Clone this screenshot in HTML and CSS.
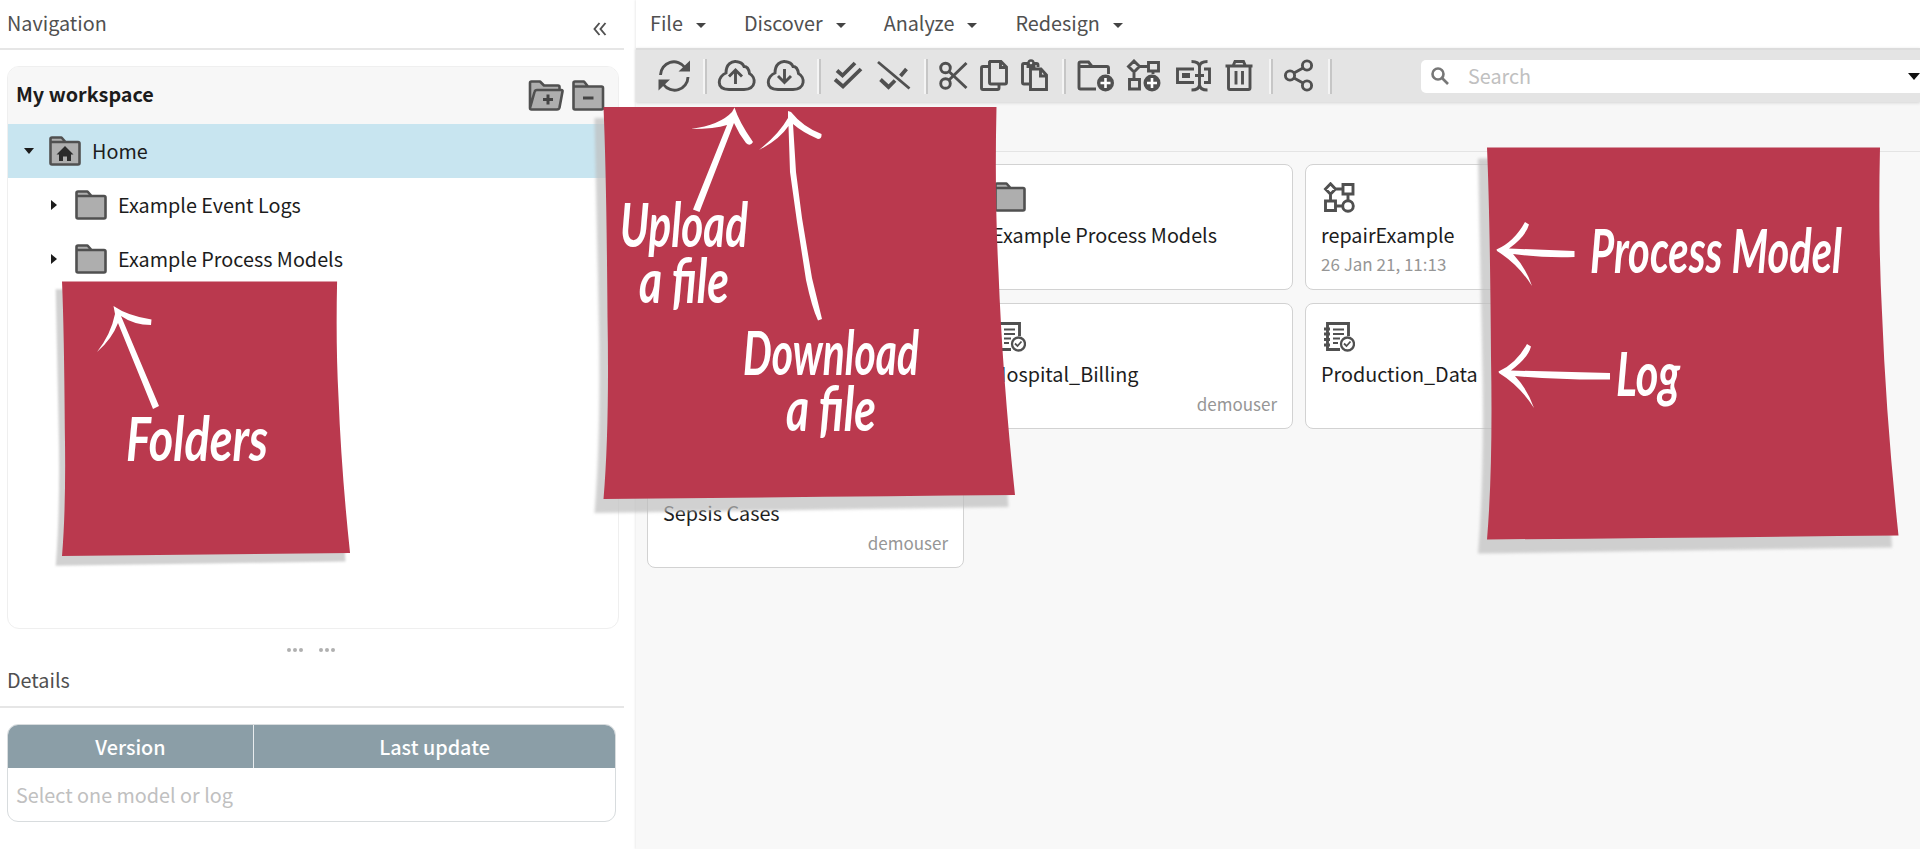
FILE: index.html
```html
<!DOCTYPE html>
<html lang="en">
<head>
<meta charset="utf-8">
<title>My workspace</title>
<link rel="stylesheet" href="styles.css">
</head>
<body>
<svg class="defs" width="0" height="0">
  <defs>
    <filter id="soft" x="-5%" y="-5%" width="110%" height="110%"><feGaussianBlur stdDeviation="1.6"/></filter>
    <symbol id="note" viewBox="-12 -2 428 414">
      <path class="note-shadow" filter="url(#soft)" d="M-9 11H380L405 400Q200 403 -9 406Q-2 320 -5 200Z"/>
      <path class="note-paper" d="M0 0H393Q391 90 395 165Q399 270 411.500 388Q200 390 0 392Q6 320 4 210Q3 70 0 0Z"/>
    </symbol>
    <symbol id="folder" viewBox="0 0 32 30">
      <path class="fold" d="M1.500 26.500V3Q1.500 1.500 3 1.500H12.500L16.500 6H29Q30.500 6 30.500 7.500V27Q30.500 28.500 29 28.500H3Q1.500 28.500 1.500 27ZM1.500 6H16.500"/>
    </symbol>
    <symbol id="model" viewBox="0 0 32 31">
      <g class="line"><path d="M7.500 1.800L12.500 7L7.500 12.200L2.500 7ZM20 2.500H30V12H20ZM2.500 19H12.500V28.500H2.500ZM12.500 7H20M7.500 12V19M25 12V18.500M12.500 24H19.500"/><circle cx="25" cy="24" r="5.300"/></g>
    </symbol>
    <symbol id="log" viewBox="0 0 32 31">
      <g class="line"><path d="M17 28.500H4.500V2.500H25.500V15M1 8H7M1 13H7M1 18.500H7M1 24H7"/><path class="thin" d="M10 8.500H21M10 13H21M10 17.500H17M10 22H15M21 22.500L23.500 25L27.500 20.500"/><circle class="mid" cx="24.500" cy="23" r="6.500"/></g>
    </symbol>
  </defs>
</svg>
<div class="app">
  <aside class="side">
    <header class="side-head"><span>Navigation</span>
      <svg class="collapse" width="14" height="14" viewBox="0 0 14 14"><path d="M6.500 1L1.500 7L6.500 13M12.500 1L7.500 7L12.500 13"/></svg>
    </header>
    <section class="tree">
      <div class="tree-head"><b>My workspace</b>
        <span class="tools">
          <svg width="36" height="31" viewBox="0 0 36 31"><path class="fold" d="M2 28V3Q2 1.500 3.500 1.500H12L16 5.500H30Q31.500 5.500 31.500 7V10M2 28L6.500 12Q7 10 9 10H33.500Q34.800 10 34.500 11.500L31.500 27.500Q31 29.500 29 29.500H3.500Q2 29.500 2 28Z"/><path class="sign" d="M20 14.500V24.500M15 19.500H25"/></svg>
          <svg width="33" height="31" viewBox="0 0 33 31"><path class="fold" d="M1.500 27.500V3Q1.500 1.500 3 1.500H12L16 6.500H29.500Q31 6.500 31 8V28Q31 29.500 29.500 29.500H3Q1.500 29.500 1.500 28ZM1.500 6.500H16"/><path class="sign" d="M11 18H21.500"/></svg>
        </span>
      </div>
      <div class="row home"><i class="down"></i>
        <svg width="32" height="30"><use href="#folder"/><path class="house" d="M16 10L24.500 18.500H22V25H18V20.500H14V25H10V18.500H7.500Z"/></svg><span>Home</span></div>
      <div class="row child"><i class="right"></i><svg width="32" height="30"><use href="#folder"/></svg><span>Example Event Logs</span></div>
      <div class="row child"><i class="right"></i><svg width="32" height="30"><use href="#folder"/></svg><span>Example Process Models</span></div>
    </section>
    <div class="splitter"><span class="dots"><i></i><i></i><i></i></span><span class="dots"><i></i><i></i><i></i></span></div>
    <header class="details-head">Details</header>
    <section class="table">
      <div class="thead"><span>Version</span><span>Last update</span></div>
      <div class="tbody">Select one model or log</div>
    </section>
  </aside>
  <main class="main">
    <nav class="menu">
      <span>File<i></i></span><span>Discover<i></i></span><span>Analyze<i></i></span><span>Redesign<i></i></span>
    </nav>
    <div class="toolbar">
      <svg width="45" height="34" viewBox="658 60 45 34"><g class="line"><path d="M660.500 76A13.500 13.500 0 0 1 685 68.500M688 78A13.500 13.500 0 0 1 663.500 85.500"/></g><path class="solid" d="M690 61.500V72.500H678.500ZM658.500 91.500V80.500H670Z"/></svg>
      <i class="sep"></i>
      <svg width="54" height="34" viewBox="707 60 54 34"><g class="line"><path d="M729 90.500C715 90 718 77 726 74C726 65 732 62 736 62.500C741 63 743 65 744 67.500C748 67.500 749 71 749.500 74.500C756 78 757 90 744 90.500ZM735.500 85V71.500M729 77.500L735.500 71L742 77.500"/></g></svg>
      <svg width="56" height="34" viewBox="761 60 56 34"><g class="line"><path d="M778 90.500C764 90 767 77 775 74C775 65 781 62 785 62.500C790 63 792 65 793 67.500C797 67.500 798 71 798.500 74.500C805 78 806 90 793 90.500ZM784.500 70V83M778 77L784.500 83.500L791 77"/></g></svg>
      <i class="sep"></i>
      <svg width="48" height="34" viewBox="821 60 48 34"><g class="heavy"><path d="M837 71.500L842.500 76.500L855 64M835 80.500L843 87.500L861 70"/></g></svg>
      <svg width="55" height="34" viewBox="869 60 55 34"><g class="heavy"><path class="slash" d="M878 63L909.500 89.500"/><path d="M900.500 77L906.500 70M880.500 80.500L888.500 88L895 81.500"/></g></svg>
      <i class="sep"></i>
      <svg width="46" height="34" viewBox="928 60 46 34"><g class="line"><circle cx="945.500" cy="69" r="4.800"/><circle cx="945.500" cy="84.500" r="4.800"/><path d="M949 72.500L966.500 89M949 81L966.500 64"/></g></svg>
      <svg width="40" height="34" viewBox="974 60 40 34"><g class="line"><path d="M990 62.500H1001L1006.500 68V83.500Q1006.500 85 1005 85H991Q989.500 85 989.500 83.500V63ZM1000.500 62.500V68.500H1006.500M989 67.500H983Q981.500 67.500 981.500 69V89Q981.500 90.500 983 90.500H997.500Q999 90.500 999 89V85.500"/></g></svg>
      <svg width="48" height="34" viewBox="1014 60 48 34"><g class="line"><path d="M1029 85H1024Q1022.500 85 1022.500 83.500V66Q1022.500 64.500 1024 64.500H1028M1034 64.500H1036.500Q1038 64.500 1038 66V68M1028 64V67.500H1034V64"/><circle class="mid" cx="1031" cy="64" r="2.500"/><path d="M1032 70H1041L1046.500 76V90.500H1030.500V70H1032M1040.500 70.500V77H1046.500"/></g></svg>
      <i class="sep"></i>
      <svg width="54" height="34" viewBox="1066 60 54 34"><g class="line"><path d="M1096 90H1080.500Q1079 90 1079 88.500V64.500Q1079 63 1080.500 63H1088.500L1092 67.500H1107Q1108.500 67.500 1108.500 69V75M1079 67.500H1092"/></g><circle class="solid" cx="1105.500" cy="84" r="8.500"/><path class="plus" d="M1105.500 79V89M1100.500 84H1110.500"/></svg>
      <svg width="48" height="34" viewBox="1120 60 48 34"><g class="line"><path d="M1134 62L1139.500 67.500L1134 73L1128.500 67.500ZM1148.500 63.500H1158.500V72H1148.500ZM1129.500 80.500H1139.500V90H1129.500ZM1139.500 67.500H1148M1134 73V80.500M1153 72V75"/></g><circle class="solid" cx="1152" cy="84" r="8.500"/><path class="plus" d="M1152 79V89M1147 84H1157"/></svg>
      <svg width="50" height="34" viewBox="1168 60 50 34"><g class="line"><path d="M1194 70H1177.500V83.500H1194M1204 70H1209.500V83.500H1204M1199.500 66V88M1195 76.500H1204M1191.500 62.500Q1199 62.500 1199.500 67.500Q1200 62.500 1207.500 62.500M1191.500 91Q1199 91 1199.500 86Q1200 91 1207.500 91"/></g><path class="solid" d="M1182 74H1190V79H1182Z"/></svg>
      <svg width="51" height="34" viewBox="1218 60 51 34"><g class="line"><path d="M1225.500 67H1252.500M1228.500 67V89Q1228.500 90.500 1230 90.500H1248.500Q1250 90.500 1250 89V67M1233 67L1235 62.500H1243.500L1245.500 67M1236 72V85.500M1242.500 72V85.500"/></g></svg>
      <i class="sep"></i>
      <svg width="55" height="34" viewBox="1273 60 55 34"><g class="line"><circle cx="1290" cy="76.500" r="4.600"/><circle cx="1307" cy="66.500" r="4.600"/><circle cx="1307" cy="86.500" r="4.600"/><path d="M1294 74L1303 69M1294 79L1303 84"/></g></svg>
      <i class="sep"></i>
      <div class="search">
        <svg width="18" height="18" viewBox="0 0 18 18"><circle cx="7" cy="7" r="5.500"/><path d="M11 11L17 17"/></svg>
        <span>Search</span><i></i>
      </div>
    </div>
    <div class="crumbs"></div>
    <div class="grid">
      <div class="card"></div>
      <div class="card"><svg width="32" height="31"><use href="#folder" width="32" height="30"/></svg><span class="name">Example Process Models</span></div>
      <div class="card"><svg width="32" height="31"><use href="#model"/></svg><span class="name">repairExample</span><span class="date">26 Jan 21, 11:13</span></div>
      <div class="card"></div>
      <div class="card"><svg width="32" height="31"><use href="#log"/></svg><span class="name">Hospital_Billing</span><span class="owner">demouser</span></div>
      <div class="card"><svg width="32" height="31"><use href="#log"/></svg><span class="name">Production_Data</span></div>
      <div class="card"><svg width="32" height="31"></svg><span class="name">Sepsis Cases</span><span class="owner">demouser</span></div>
    </div>
  </main>
</div>
<svg class="notes" width="1920" height="850" viewBox="0 0 1920 850">
  <use href="#note" x="53.600" y="280.100" width="299.600" height="289.800"/>
  <use href="#note" x="591.500" y="105" width="428" height="414"/>
  <use href="#note" x="1475" y="145.500" width="428" height="414"/>
  <g class="ink">
    <path d="M113.500 306Q128 316 151.500 319.500L151 325Q134 325 121 316L159 406L153 409L118 323Q112 339 97 352Q111 334 115 314Z"/>
    <path d="M734.500 107.500Q739 122 753 142Q750 147 746 143Q739 134 734 123L699.500 212L693 209.500L727 125Q715 129 691 129Q720 125 732 112Z"/>
    <path d="M788 111L791 112Q803 127 821.500 134Q822 139 818 139Q802 132 793 124L796 172L802 218L812 278L822 319L818 320.500Q812 308 806 280L797 222L790 172L788.500 126Q779 140 759 150Q779 134 788 118Z"/>
    <path d="M1496.500 249.500Q1514 242 1525 222L1529 224.500Q1526 236 1509 248.500L1574.500 251V257Q1541 258 1513 254Q1526 268 1532 286Q1518 264 1497 251Z"/>
    <path d="M1498.500 371.500Q1516 364 1527 344L1531 346.500Q1528 358 1511 370.500L1610 373V379.500Q1560 380 1515 376Q1528 390 1534 408Q1520 386 1499 373Z"/>
  </g>
  <g class="hand">
    <text x="126" y="461" textLength="142" lengthAdjust="spacingAndGlyphs">Folders</text>
    <text x="620" y="247" textLength="128" lengthAdjust="spacingAndGlyphs">Upload</text>
    <text x="639" y="303" textLength="90" lengthAdjust="spacingAndGlyphs">a file</text>
    <text x="743" y="375" textLength="176" lengthAdjust="spacingAndGlyphs">Download</text>
    <text x="786" y="431" textLength="90" lengthAdjust="spacingAndGlyphs">a file</text>
    <text x="1590" y="273" textLength="252" lengthAdjust="spacingAndGlyphs">Process Model</text>
    <text x="1616" y="396" textLength="64" lengthAdjust="spacingAndGlyphs">Log</text>
  </g>
</svg>
</body>
</html>
```
FILE: styles.css
```css
* { box-sizing: border-box; }
body { margin: 0; background: #fff; font-family: "Noto Sans CJK SC", "Open Sans", sans-serif; font-size: 19.8px; line-height: 28px; color: #1c1c1c; overflow: hidden; }
.defs { position: absolute; }
svg { display: block; flex: none; }
.app { display: flex; height: 849px; width: 1920px; }

.side { width: 636px; flex: none; padding-right: 12px; color: #505050; }
.side-head { display: flex; justify-content: space-between; height: 50px; padding: 9px 17px 0 7px; border-bottom: 2px solid #e6e6e6; }
.collapse { margin-top: 13px; fill: none; stroke: #505050; stroke-width: 1.9; }
.tree { height: 563px; width: 612px; margin: 16px 0 0 7px; border: 1px solid #efefef; border-radius: 12px; overflow: hidden; color: #1c1c1c; }
.tree-head { display: flex; justify-content: space-between; height: 57px; padding: 13px 13px 0 8px; background: #f7f7f7; }
.tree-head b { font-weight: 700; }
.tools { display: flex; gap: 8px; }
.row { display: flex; align-items: center; height: 54px; }
.row span { margin-left: 11px; }
.home { background: #c8e5f0; padding-left: 16px; }
.child { padding-left: 43px; }
.down { border: 5px solid transparent; border-top: 6px solid #1c1c1c; border-bottom: 0; margin-right: 15px; }
.right { border: 5px solid transparent; border-left: 6px solid #1c1c1c; border-right: 0; margin-right: 18px; }
.fold { fill: #aeaeae; stroke: #505050; stroke-width: 2.6; stroke-linejoin: round; }
.sign { fill: none; stroke: #444; stroke-width: 3; }
.house { fill: #2b2b2b; }
.splitter { display: flex; justify-content: center; gap: 16px; padding: 19px 3px 0 0; height: 37px; }
.dots { display: flex; gap: 2px; }
.dots i { width: 4px; height: 4px; border-radius: 2px; background: #b0b0b0; }
.details-head { height: 42px; padding: 0 0 0 7px; border-bottom: 2px solid #e6e6e6; }
.table { width: 609px; height: 98px; margin: 16px 0 0 7px; border: 1px solid #d8dcde; border-radius: 11px; overflow: hidden; }
.thead { display: flex; height: 43px; background: #8b9ea7; color: #fff; font-weight: 500; text-align: center; line-height: 43px; }
.thead span { flex: 1; }
.thead span:first-child { flex: none; width: 246px; border-right: 1px solid #e8ecee; }
.tbody { padding: 13px 8px; color: #c0c0c0; }

.main { flex: 1; min-width: 0; background: #f8f8f8; box-shadow: -1px 0 2px #ececec; }
.menu { display: flex; gap: 38px; height: 48px; padding: 9px 0 0 14px; background: #fff; color: #505050; }
.menu span { display: flex; align-items: center; height: 28px; }
.menu i { border: 5px solid transparent; border-top: 5px solid #444; border-bottom: 0; margin: 5px 0 0 13px; }
.toolbar { display: flex; align-items: center; height: 54px; padding-left: 22px; background: #e4e4e4; border-top: 2px solid #dcdcdc; box-shadow: 0 1px 3px #d4d4d4; position: relative; }
.sep { width: 4px; height: 35px; flex: none; border-left: 2px solid #f4f4f4; border-right: 2px solid #c6c6c6; }
.line { fill: none; stroke: #505050; stroke-width: 2.9; }
.line .thin { stroke-width: 1.8; }
.line .mid { stroke-width: 2.3; }
.heavy { fill: none; stroke: #505050; stroke-width: 3.8; }
.heavy .slash { stroke-width: 2.8; }
.solid { fill: #505050; }
.plus { stroke: #fff; stroke-width: 2.6; }
.search { display: flex; align-items: center; flex: 1; height: 33px; margin-left: 89px; padding-left: 10px; background: #fff; border-radius: 5px 0 0 5px; color: #c0c0c0; }
.search svg { fill: none; stroke: #777; stroke-width: 2.6; }
.search span { margin-left: 19px; }
.search i { margin-left: auto; border: 6px solid transparent; border-top: 7px solid #111; border-bottom: 0; }
.crumbs { height: 50px; background: #f7f7f7; border-bottom: 1px solid #e4e4e4; }
.grid { display: grid; grid-template-columns: repeat(3, 317px); grid-auto-rows: 126px; gap: 13px 12px; padding: 12px 0 0 11px; }
.card { display: flex; flex-direction: column; padding: 17px 15px 0 15px; background: #fff; border: 1px solid #d2d2d2; border-radius: 8px; }
.card svg { margin-left: 2px; }
.name { margin-top: 8px; }
.date, .owner { font-size: 17px; color: #969696; margin-top: 1px; }
.owner { text-align: right; margin-top: 2px; }

.notes { position: absolute; left: 0; top: 0; }
.note-shadow { fill: rgba(190, 190, 190, .7); }
.note-paper { fill: #ba394e; }
.ink, .hand { fill: #fff; }
.hand { font: italic 700 62px Lato, sans-serif; }
```
